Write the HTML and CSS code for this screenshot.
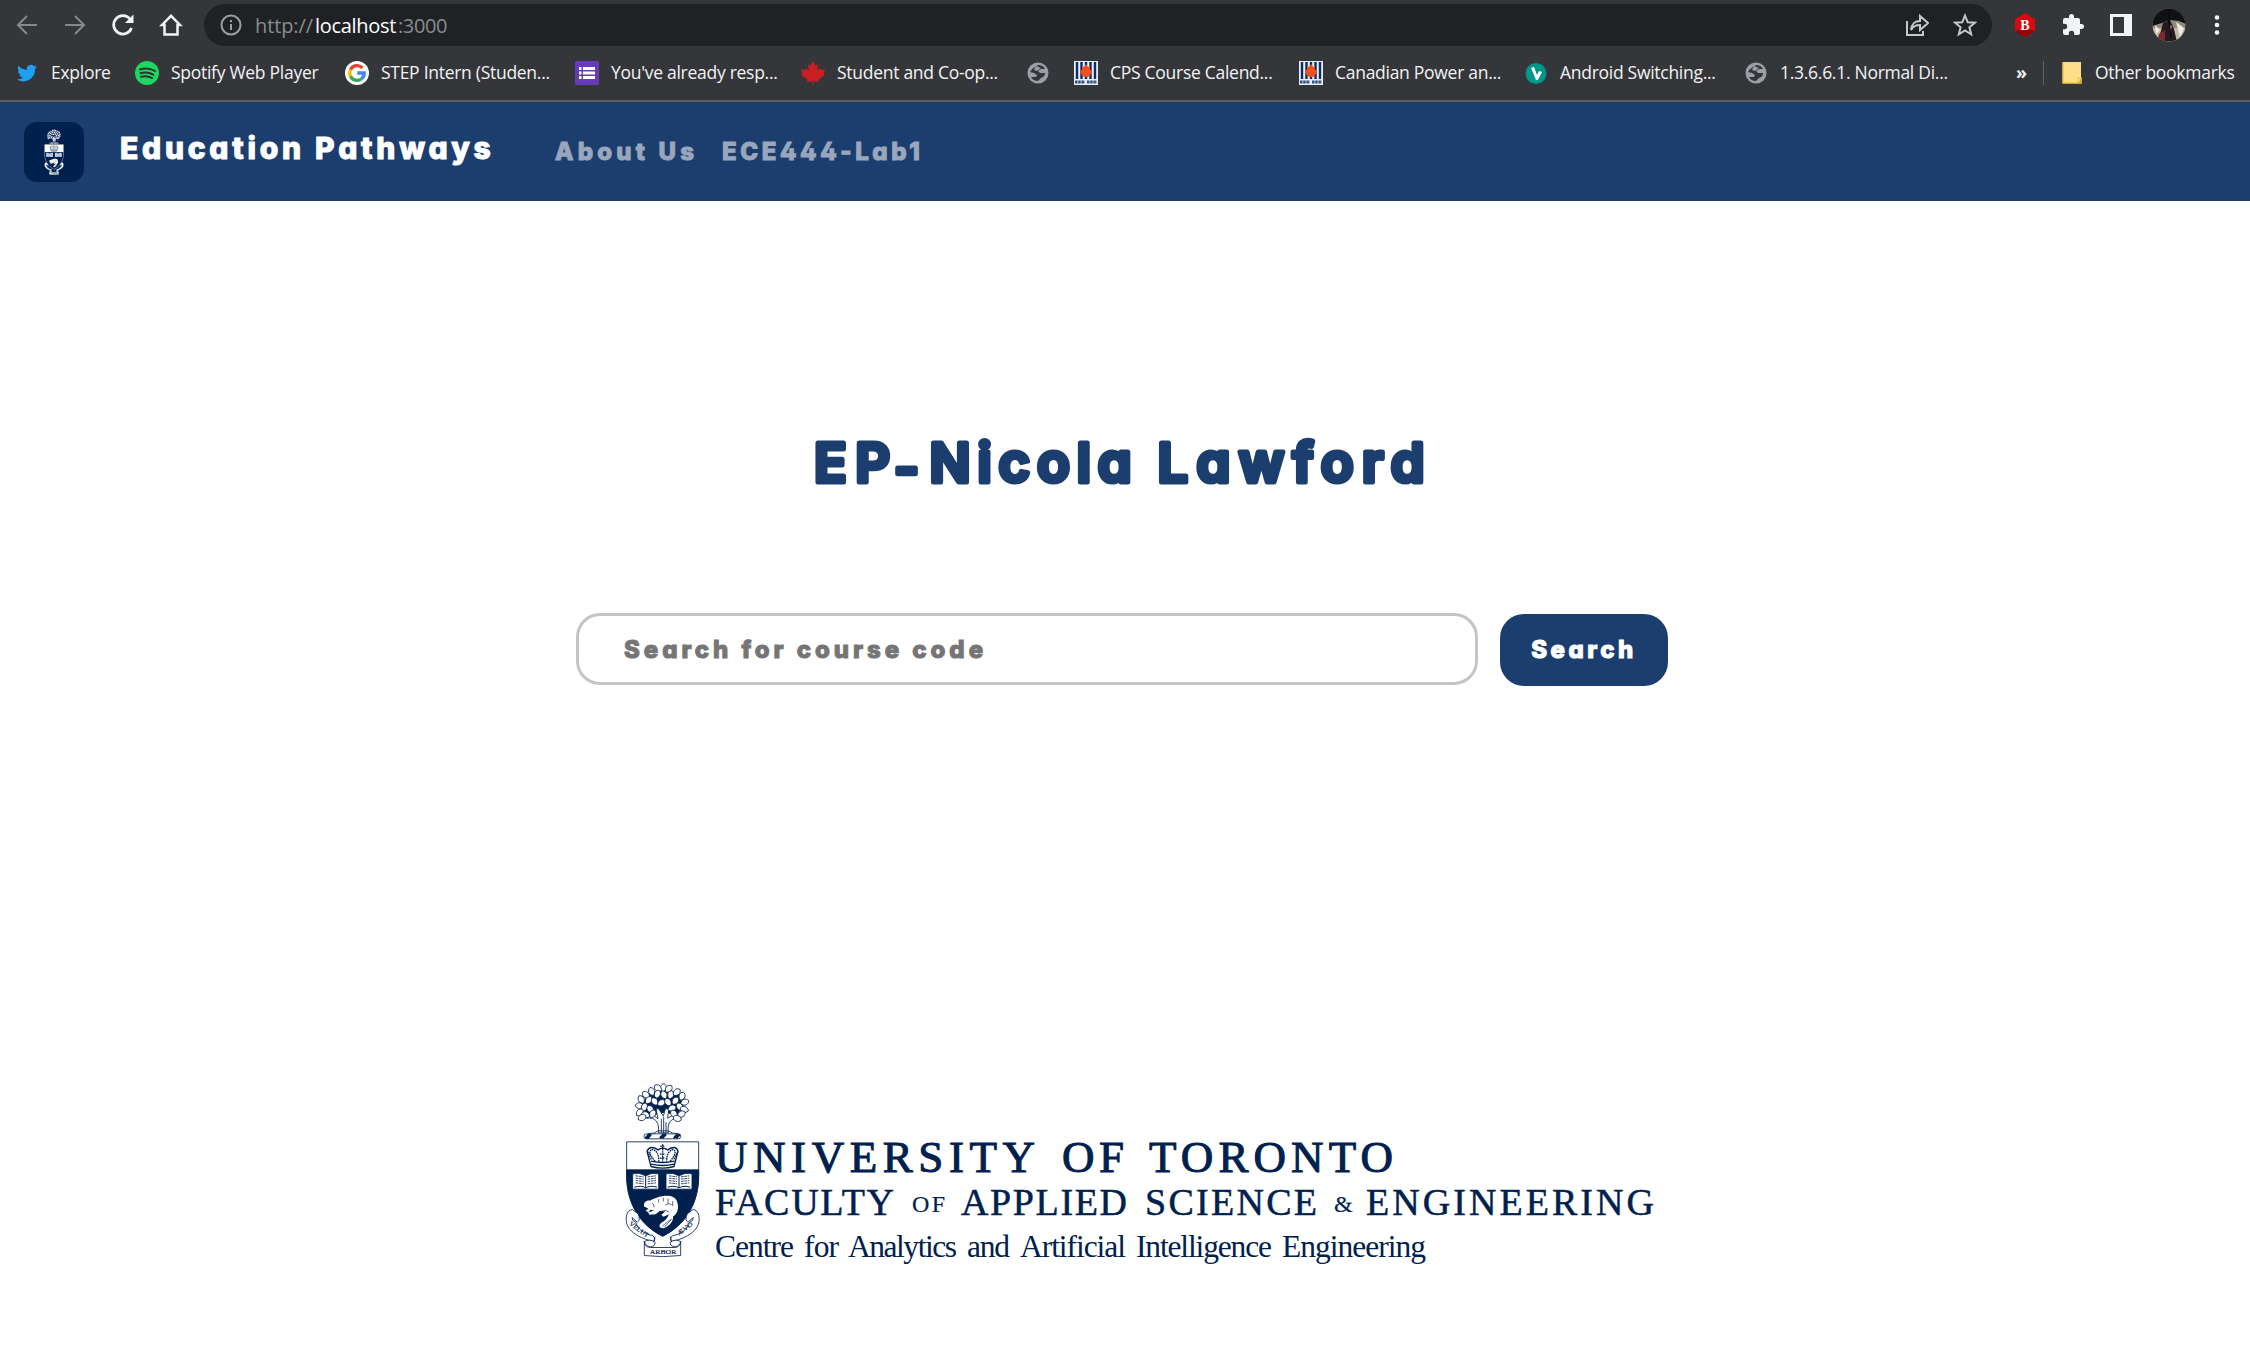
FILE: index.html
```html
<!DOCTYPE html>
<html lang="en">
<head>
<meta charset="utf-8">
<title>Education Pathways</title>
<link rel="stylesheet" href="styles.css">
</head>
<body>
<svg class="defs" width="0" height="0" aria-hidden="true">
  <defs>
    <path id="leaf" d="M0-13C12-8 12 6 0 13C-12 6-12-8 0-13Z" stroke="currentColor" stroke-width="2.400" class="paper"/>
    <symbol id="globe" viewBox="0 0 24 24"><circle cx="12" cy="12" r="10.500" fill="#9aa0a6"/><path d="M12 4Q17 4 19 8L15 8L12 10L14 12H19Q19 16 15 17L12 20Q7 20 5 16L10 16L11 14L8 12L4 11Q5 8 9 6Z" fill="#35363a"/><path d="M10 5L15 7L11 10L8 9Z" fill="#9aa0a6"/></symbol>
    <symbol id="cps" viewBox="0 0 24 24"><path d="M0 0H24V24H0Z" fill="#e8eef5"/><path d="M3 1V18M7.500 1V18M12 1V18M16.500 1V18M21 1V18" stroke="#0d2c64" stroke-width="2.400"/><path d="M12 3L14 6L16 5L16 9L18 9L17 13L14 16H10L7 13L6 9L8 9L8 5L10 6Z" fill="#f0501e"/><path d="M1 21H11M13 21H23" stroke="#31517e" stroke-width="3" stroke-dasharray="2.500 .7"/></symbol>
    <symbol id="crest" viewBox="75 70 225 527">
      <g fill="none" stroke="currentColor" stroke-width="2.500" stroke-linejoin="round">
        <path d="M145 108L190 88L235 105L250 140L230 168L195 160L150 170L120 145Z" fill="currentColor"/>
        <path class="paper" d="M140 178C165 174 180 190 175 222H205C200 190 215 178 238 176L222 168L203 178L206 150H196L190 172L176 150H168L174 180L158 168Z"/>
        <path d="M184 180V222M191 174V222M198 190V222"/>
        <use href="#leaf" transform="translate(190 87) rotate(10)"/><use href="#leaf" transform="translate(174 88) rotate(-50)"/><use href="#leaf" transform="translate(206 90) rotate(45)"/>
        <use href="#leaf" transform="translate(155 98) rotate(-20)"/><use href="#leaf" transform="translate(172 106) rotate(20)"/><use href="#leaf" transform="translate(192 108) rotate(-25)"/><use href="#leaf" transform="translate(212 108) rotate(20)"/><use href="#leaf" transform="translate(230 100) rotate(50)"/>
        <use href="#leaf" transform="translate(138 108) rotate(-50)"/><use href="#leaf" transform="translate(124 122) rotate(-30)"/><use href="#leaf" transform="translate(146 124) rotate(40)"/><use href="#leaf" transform="translate(164 128) rotate(-35)"/><use href="#leaf" transform="translate(184 132) rotate(60)"/><use href="#leaf" transform="translate(204 130) rotate(-35)"/><use href="#leaf" transform="translate(226 126) rotate(40)"/><use href="#leaf" transform="translate(246 112) rotate(20)"/><use href="#leaf" transform="translate(254 130) rotate(70)"/>
        <use href="#leaf" transform="translate(119 141) rotate(-80)"/><use href="#leaf" transform="translate(133 145) rotate(20)"/><use href="#leaf" transform="translate(151 151) rotate(-40)"/><use href="#leaf" transform="translate(216 148) rotate(70)"/><use href="#leaf" transform="translate(239 144) rotate(-30)"/><use href="#leaf" transform="translate(253 152) rotate(-70)"/>
        <use href="#leaf" transform="translate(119 161) rotate(45)"/><use href="#leaf" transform="translate(137 168) rotate(-70)"/><use href="#leaf" transform="translate(126 176) rotate(65)"/><use href="#leaf" transform="translate(158 165) rotate(30)"/><use href="#leaf" transform="translate(222 165) rotate(-40)"/><use href="#leaf" transform="translate(244 166) rotate(60)"/><use href="#leaf" transform="translate(232 179) rotate(-70)"/>
        <path d="M144 224Q165 226 174 216H205Q216 226 234 224"/>
        <rect class="paper" x="132" y="225" width="110" height="15" rx="7"/>
        <path d="M137 238L147 226M143 238L153 226M180 238L192 226M186 238L198 226M222 238L232 226M229 238L239 226" stroke-width="7"/>
        <path class="paper edge" d="M80 249H296V350C296 440 250 502 188 532C126 502 80 440 80 350Z"/>
        <path class="edge" d="M80 333H296V350C296 440 250 502 188 532C126 502 80 440 80 350Z" fill="currentColor"/>
        <path d="M153 323L141 277Q150 257 174 273Q188 263 203 273Q228 257 234 277L222 323Q188 333 153 323ZM153 307Q188 315 223 307M154 316Q188 324 222 316" stroke-width="4"/>
        <path d="M166 308Q138 276 158 272Q178 278 176 308M210 308Q236 276 218 272Q200 278 200 308M188 256V308M181 262H195M143 278L154 303M234 278L221 303M180 286H196M180 298H196" stroke-width="4" stroke-dasharray="5 2"/>
        <g class="paper"><path d="M98 345Q118 339 137 351Q156 339 176 345V391H98Z"/><path d="M198 345Q218 339 237 351Q256 339 276 345V391H198Z"/></g>
        <path d="M137 349V386M237 349V386M103 385Q124 379 137 387Q150 379 171 385M203 385Q224 379 237 387Q250 379 271 385" stroke-width="3"/>
        <path d="M107 351L131 354M107 358L131 361M107 365L131 368M107 372L131 375M143 354L168 351M143 361L168 358M143 368L168 365M143 375L168 372M207 351L231 354M207 358L231 361M207 365L231 368M207 372L231 375M243 354L268 351M243 361L268 358M243 368L268 365M243 375L268 372" stroke-dasharray="8 2"/>
        <path class="paper" stroke="none" d="M132 443C130 430 139 423 151 425C173 412 217 401 230 425C239 447 232 466 219 473C221 488 207 502 192 508C179 509 173 502 184 492C195 487 203 476 207 466L190 474L184 468L196 458L180 456L167 466L148 468L145 461L162 455L151 453L146 461L137 456L145 449Z"/>
        <path d="M176 421V431M190 417V428M204 419V434M218 427V442M196 439Q203 431 215 437M187 502L211 482M193 505L216 480M184 458Q195 450 208 460M156 433Q164 437 162 445" stroke-width="2"/>
        <g class="paper">
          <path d="M97 452C78 453 75 482 82 499C91 523 129 542 161 548Q169 541 158 530C134 527 114 512 107 490Q96 487 96 476L112 490Q123 483 114 465Z"/>
          <path d="M279 452C298 453 301 482 294 499C285 523 247 542 215 548Q207 541 218 530C242 527 262 512 269 490Q280 487 280 476L264 490Q253 483 262 465Z"/>
          <path d="M133 547Q133 565 151 566H224Q242 565 242 547V590Q188 597 133 590Z"/>
          <path d="M133 548Q149 539 165 550Q167 562 151 564Q137 562 133 548M242 548Q226 539 211 550Q209 562 225 564Q239 562 242 548"/>
        </g>
        <path d="M165 533L161 550M211 533L215 550"/>
      </g>
      <g fill="currentColor" class="motto"><text x="149" y="587" textLength="80" lengthAdjust="spacingAndGlyphs">ARBOR</text><text transform="translate(86 497) rotate(36)" textLength="68" lengthAdjust="spacingAndGlyphs">VELUT</text><text transform="translate(237 531) rotate(-38)" textLength="54" lengthAdjust="spacingAndGlyphs">ÆVO</text></g>
    </symbol>
  </defs>
</svg>

<header class="browser">
  <div class="toolbar">
    <div class="controls">
      <svg class="dim" viewBox="0 0 24 24"><path d="M22 12H3M12 3L3 12L12 21"/></svg>
      <svg class="dim" viewBox="0 0 24 24"><path d="M2 12H21M12 3L21 12L12 21"/></svg>
      <svg viewBox="0 0 24 24"><path d="M20.500 15A9.200 9.200 0 1 1 19 6" stroke-width="2.700"/><path d="M22.500 1.500V10H14Z" fill="#f1f3f4" stroke="none"/></svg>
      <svg viewBox="0 0 24 24"><path d="M5.500 12V21.500H18.500V12H21L12 2.800L3 12Z" stroke-width="2.500"/></svg>
    </div>
    <div class="address">
      <svg class="info" viewBox="0 0 24 24"><circle cx="12" cy="12" r="9.500"/><path d="M12 11V17M12 7V9.300"/></svg>
      <div class="url"><span class="scheme">http://</span><span class="host">localhost</span><span class="port">:3000</span></div>
      <svg class="share" viewBox="0 0 24 24"><path d="M2 8V22H18V18M6 17C7 10 10 8 15 8V3L23 10L15 17V12C11 12 8 13 6 17Z"/></svg>
      <svg class="star" viewBox="0 0 24 24"><path d="M12 2.500L14.700 9.200L22 9.700L16.400 14.300L18.200 21.300L12 17.400L5.800 21.300L7.600 14.300L2 9.700L9.300 9.200Z"/></svg>
    </div>
    <div class="extensions">
      <svg class="ext-b" viewBox="0 0 24 26"><path d="M12 1L22 7V19L12 25L2 19V7Z" fill="#d60b10"/><path d="M2 19L12 25L22 19L12 16Z" fill="#970006"/><text x="12" y="17.500">B</text></svg>
      <svg viewBox="0 0 24 24"><path fill="#f1f3f4" stroke="none" d="M20.500 11H19V7a2 2 0 0 0-2-2h-4V3.500a2.500 2.500 0 0 0-5 0V5H4a2 2 0 0 0-2 2v3.800h1.500a2.700 2.700 0 0 1 0 5.400H2V20a2 2 0 0 0 2 2h3.800v-1.500a2.700 2.700 0 0 1 5.400 0V22H17a2 2 0 0 0 2-2v-4h1.500a2.500 2.500 0 0 0 0-5z"/></svg>
      <svg viewBox="0 0 24 24"><path fill="#f1f3f4" stroke="none" fill-rule="evenodd" d="M1 1H23V23H1ZM4 4V20H15V4Z"/></svg>
      <svg class="avatar" viewBox="0 0 34 34"><clipPath id="round"><circle cx="17" cy="17" r="16.500"/></clipPath><g clip-path="url(#round)" stroke="none"><path d="M0 0H34V34H0Z" fill="#8e8b78"/><path d="M0 20H34V34H0Z" fill="#c1b9ab"/><path d="M3 17L8 22L4 26M24 14L32 20L28 29" fill="#efebe2"/><path d="M0 0H34V16L27 13L18 12L10 15L0 18Z" fill="#101115"/><path d="M11 15L18 12L22 21L25 34H5L9 23Z" fill="#28191c"/><path d="M7 26L13 22L13 34H5Z" fill="#7c2931"/><path d="M17 17L20 18L18 25Z" fill="#c99082"/></g><path d="M17 1V14L19 30" stroke="#0b0b0d" stroke-width="1.500"/></svg>
      <svg viewBox="0 0 24 24"><g fill="#f1f3f4" stroke="none"><circle cx="12" cy="4.500" r="2.300"/><circle cx="12" cy="12" r="2.300"/><circle cx="12" cy="19.500" r="2.300"/></g></svg>
    </div>
  </div>
  <nav class="bookmarks">
    <a><svg viewBox="0 0 24 24"><path fill="#1da1f2" d="M22 5.800a8.500 8.500 0 0 1-2.300.7 4 4 0 0 0 1.700-2.200 8 8 0 0 1-2.500 1 4 4 0 0 0-6.900 3.600A11.500 11.500 0 0 1 3.500 4.700a4 4 0 0 0 1.300 5.400 4 4 0 0 1-1.800-.5 4 4 0 0 0 3.200 4 4 4 0 0 1-1.800.1 4 4 0 0 0 3.800 2.800A8.200 8.200 0 0 1 2 18.200 11.500 11.500 0 0 0 20 8a8 8 0 0 0 2-2.200z"/></svg><span>Explore</span></a>
    <a><svg viewBox="0 0 24 24"><circle cx="12" cy="12" r="12" fill="#1ed760"/><path d="M5 8.500Q13 6 20 10M5.500 12.300Q12 10.300 18.300 13.700M6 15.800Q12 14.200 17 17" fill="none" stroke="#25352c" stroke-width="2" stroke-linecap="round"/></svg><span>Spotify Web Player</span></a>
    <a><svg viewBox="0 0 24 24"><circle cx="12" cy="12" r="12" fill="#fff"/><g fill="none" stroke-width="3.300"><path d="M17.500 7A7.300 7.300 0 0 0 5.500 8.700" stroke="#ea4335"/><path d="M5.500 8.700A7.500 7.500 0 0 0 5.500 15.300" stroke="#fbbc05"/><path d="M5.500 15.300A7.300 7.300 0 0 0 16.700 17.700" stroke="#34a853"/><path d="M16.700 17.700Q19.400 15.500 19.200 12H12.300" stroke="#4285f4"/></g></svg><span>STEP Intern (Studen...</span></a>
    <a><svg viewBox="0 0 24 24"><rect width="24" height="24" rx="1.500" fill="#673ab7"/><path d="M4 7.500H6.500M4 12H6.500M4 16.500H6.500M8 7.500H20M8 12H20M8 16.500H20" stroke="#fff" stroke-width="2.800"/></svg><span>You've already resp...</span></a>
    <a><svg viewBox="0 0 24 24"><path fill="#c91f23" d="M12 0L14.500 4.500L17 3.500L16 10L19 7L20 9L24 8.500L22.500 13L24 14L17.500 18.500L18 21L12.600 20V24H11.400V20L6 21L6.500 18.500L0 14L1.500 13L0 8.500L4 9L5 7L8 10L7 3.500L9.500 4.500Z"/></svg><span>Student and Co-op...</span></a>
    <a><svg><use href="#globe"/></svg></a>
    <a><svg><use href="#cps"/></svg><span>CPS Course Calend...</span></a>
    <a><svg><use href="#cps"/></svg><span>Canadian Power an...</span></a>
    <a><svg viewBox="0 0 24 24"><circle cx="12" cy="12.500" r="10.500" fill="#009688"/><path d="M7 7L10 6L13 14L15 10L18 11L14 19H12Z" fill="#fff"/></svg><span>Android Switching...</span></a>
    <a><svg><use href="#globe"/></svg><span>1.3.6.6.1. Normal Di...</span></a>
    <b class="more">»</b>
    <a class="other"><svg viewBox="0 0 24 24"><path d="M2 1H20V18L18 22H2Z" fill="#ffe08a"/><path d="M2 1V22H17V17H20V22H17" fill="none" stroke="#f3c64b" stroke-width="1.500"/></svg><span>Other bookmarks</span></a>
  </nav>
</header>

<nav class="site-nav">
  <div class="badge"><svg><use href="#crest"/></svg></div>
  <a class="brand">Education Pathways</a>
  <a class="link about">About Us</a>
  <a class="link lab">ECE444-Lab1</a>
</nav>

<main>
  <h1><svg viewBox="0 0 620 72" width="620" height="72"><text y="54.500"><tspan x="4" textLength="76">EP</tspan><tspan x="84" dy="5">-</tspan></text><text x="119.500" y="54.500" textLength="202">Nicola</text><text x="347.500" y="54.500" textLength="267">Lawford</text></svg></h1>
  <form class="search">
    <input type="text" placeholder="Search for course code">
    <button type="button">Search</button>
  </form>
  <footer class="wordmark">
    <svg class="arms"><use href="#crest"/></svg>
    <svg class="words" viewBox="715 1083 945 200" width="945" height="200">
      <g class="line1"><text x="715" y="1172.500" textLength="320">UNIVERSITY</text><text x="1062" y="1172.500" textLength="62">OF</text><text x="1149" y="1172.500" textLength="244">TORONTO</text></g>
      <g class="line2"><text x="715" y="1216" textLength="179">FACULTY</text><text class="small" x="912" y="1213" textLength="33">OF</text><text x="961" y="1216" textLength="166">APPLIED</text><text x="1145" y="1216" textLength="172">SCIENCE</text><text class="small" x="1334" y="1213" textLength="17">&amp;</text><text x="1366" y="1216" textLength="288">ENGINEERING</text></g>
      <g class="line3"><text x="715" y="1257.500" textLength="79">Centre</text><text x="804" y="1257.500" textLength="35">for</text><text x="848" y="1257.500" textLength="109">Analytics</text><text x="967" y="1257.500" textLength="43">and</text><text x="1020" y="1257.500" textLength="106">Artificial</text><text x="1136" y="1257.500" textLength="136">Intelligence</text><text x="1282" y="1257.500" textLength="144">Engineering</text></g>
    </svg>
  </footer>
</main>
</body>
</html>
```
FILE: styles.css
```css
* { box-sizing: border-box; }
body { margin: 0; height: 1348px; overflow: hidden; background: #fff; font-family: "Inter", sans-serif; }
.defs { position: absolute; }
svg { display: block; flex: none; }

/* Browser chrome */
.browser { height: 102px; background: #35363a; border-bottom: 2px solid #5f6063; font-family: "Open Sans", sans-serif; color: #f1f3f4; }
.toolbar { display: flex; height: 50px; padding-top: 4px; }
.toolbar svg { width: 24px; height: 24px; fill: none; stroke: #f1f3f4; stroke-width: 2; }
.controls { display: flex; align-items: center; gap: 24px; height: 42px; width: 204px; padding-left: 15px; }
.toolbar .dim { stroke: #86888c; }
.address { display: flex; align-items: center; width: 1788px; height: 42px; padding: 0 15px; border-radius: 21px; background: #202124; }
.toolbar .info { stroke: #9aa0a6; }
.toolbar .share, .toolbar .star { stroke: #c5c8cb; }
.url { flex: 1; display: flex; margin-left: 12px; font-size: 20px; line-height: 43px; color: #898c91; }
.scheme { width: 60px; letter-spacing: -.1px; }
.host { width: 83px; color: #fff; letter-spacing: -.3px; }
.port { letter-spacing: -.4px; }
.star { margin-left: 24px; }
.extensions { display: flex; align-items: center; height: 42px; padding-left: 21px; gap: 24px; }
.toolbar .ext-b { height: 26px; stroke: none; }
.ext-b text { font: bold 14px "Liberation Serif", serif; text-anchor: middle; fill: #fff; }
.toolbar .avatar { width: 34px; height: 34px; margin: 0 -5px; }

.bookmarks { display: grid; grid-template-columns: 120px 210px 230px 226px 225px 48px 225px 225px 220px 272px 27px auto; height: 45px; padding-left: 15px; align-items: center; font-size: 17.500px; }
.bookmarks a { display: flex; align-items: center; gap: 12px; white-space: nowrap; letter-spacing: -.28px; }
.bookmarks span { line-height: 24px; padding-bottom: 2px; }
.bookmarks svg { width: 24px; height: 24px; }
.more { font-size: 18px; line-height: 24px; padding-bottom: 2px; }
.bookmarks .other { height: 24px; padding-left: 17px; border-left: 1px solid #606266; gap: 10px; }

/* Site navigation */
.site-nav { display: flex; align-items: center; height: 99px; padding-left: 24px; background: #1c3e6e; }
.badge { display: flex; align-items: center; justify-content: center; width: 60px; height: 60px; margin-top: 1px; border-radius: 13px; background: #00204e; color: #00204e; --edge: #c6cedb; }
.badge svg { width: 20px; height: 46px; }
.paper { fill: #fff; }
.edge { stroke: var(--edge, currentColor); }
.brand, .link, input, button { font-weight: 800; font-feature-settings: "cv11", "cv02"; -webkit-text-stroke: 1px; }
.brand { width: 435px; margin: -8px 0 0 36px; font-size: 30px; letter-spacing: 3.750px; color: #fff; }
.link { font-size: 24px; letter-spacing: 3.600px; color: #99a6bc; white-space: nowrap; }
.about { width: 167px; letter-spacing: 4.200px; }

/* Search page */
main { display: flex; flex-direction: column; align-items: center; height: 1147px; }
h1 { margin: 226px 10px 0 0; height: 72px; }
h1 text { font-family: "Inter", sans-serif; font-size: 54px; font-weight: 600; font-feature-settings: "cv11"; fill: #1c3e6e; stroke: #1c3e6e; stroke-width: 5; stroke-linejoin: round; }
.search { display: flex; align-items: flex-start; width: 1098px; gap: 22px; margin-top: 114px; }
input { width: 902px; height: 72px; padding: 0 45px; border: 3px solid #c4c4c4; border-radius: 24px; font-family: inherit; font-size: 24px; letter-spacing: 3.950px; }
input::placeholder { color: #757575; opacity: 1; }
button { width: 168px; height: 72px; margin-top: 1px; border: 0; border-radius: 24px; padding: 0 0 2px; background: #1c3e6e; color: #fff; font-family: inherit; font-size: 24px; letter-spacing: 3.500px; }
.wordmark { display: flex; align-self: flex-start; margin: 396px 0 0 625px; color: #00204e; }
.arms { width: 75px; height: 176px; margin-right: 15px; }
.motto { font: 19px "Liberation Serif", serif; stroke: currentColor; stroke-width: .5; }
.words { font-family: "Liberation Serif", serif; fill: #00204e; }
.line1 { font-size: 45px; stroke: #00204e; stroke-width: 1; }
.line2 { font-size: 38px; stroke: #00204e; stroke-width: .5; }
.line2 .small { font-size: 24px; stroke-width: .2; }
.line3 { font-size: 31.500px; }
```
